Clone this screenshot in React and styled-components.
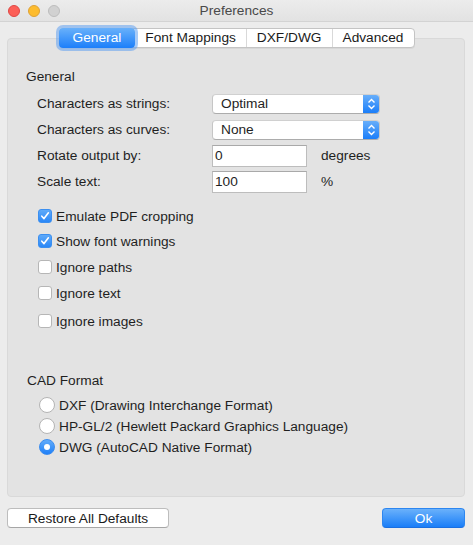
import React from "react";
import styled, { createGlobalStyle } from "styled-components";

const GlobalStyle = createGlobalStyle`
  html, body {
    margin: 0;
    padding: 0;
    background: #ececec;
  }
  body {
    font-family: "Liberation Sans", Arial, sans-serif;
    font-size: 13.7px;
    color: #1f1f1f;
  }
`;

const tabs = ["General", "Font Mappings", "DXF/DWG", "Advanced"];

const options = [
  { label: "Emulate PDF cropping", checked: true },
  { label: "Show font warnings", checked: true },
  { label: "Ignore paths", checked: false },
  { label: "Ignore text", checked: false },
  { label: "Ignore images", checked: false, spaced: true },
];

const formats = [
  { label: "DXF (Drawing Interchange Format)", selected: false },
  { label: "HP-GL/2 (Hewlett Packard Graphics Language)", selected: false },
  { label: "DWG (AutoCAD Native Format)", selected: true },
];

function Chevrons() {
  return (
    <svg width="9" height="12" viewBox="0 0 9 12">
      <path
        d="M1.5 4.5 L4.5 1.5 L7.5 4.5 M1.5 7.5 L4.5 10.5 L7.5 7.5"
        fill="none"
        stroke="#fff"
        strokeWidth="1.4"
      />
    </svg>
  );
}

function Check() {
  return (
    <svg width="10" height="10" viewBox="0 0 10 10">
      <path
        d="M1.8 5.2 L4 7.6 L8.4 1.8"
        fill="none"
        stroke="#fff"
        strokeWidth="1.6"
        strokeLinecap="round"
        strokeLinejoin="round"
      />
    </svg>
  );
}

export default function App() {
  return (
    <Window>
      <GlobalStyle />
      <TitleBar>
        <Lights>
          <Light $color="#fc5f57" $edge="#df4744" />
          <Light $color="#fdbc2e" $edge="#dea236" />
          <Light $color="#d1d1d1" $edge="#bdbdbd" />
        </Lights>
        <Title>Preferences</Title>
      </TitleBar>
      <Body>
        <Segments>
          {tabs.map((t, i) => (
            <Segment key={t} $active={i === 0}>
              {t}
            </Segment>
          ))}
        </Segments>
        <Panel>
          <SectionTitle>General</SectionTitle>
          <FormGrid>
            <Label>Characters as strings:</Label>
            <Popup>
              <PopupText>Optimal</PopupText>
              <PopupArrow>
                <Chevrons />
              </PopupArrow>
            </Popup>
            <Label>Characters as curves:</Label>
            <Popup>
              <PopupText>None</PopupText>
              <PopupArrow>
                <Chevrons />
              </PopupArrow>
            </Popup>
            <Label>Rotate output by:</Label>
            <Field>0</Field>
            <Unit>degrees</Unit>
            <Label>Scale text:</Label>
            <Field>100</Field>
            <Unit>%</Unit>
          </FormGrid>
          <CheckList>
            {options.map((o) => (
              <CheckRow key={o.label} $spaced={o.spaced}>
                <Box $checked={o.checked}>{o.checked && <Check />}</Box>
                {o.label}
              </CheckRow>
            ))}
          </CheckList>
          <SectionTitle $cad>CAD Format</SectionTitle>
          <RadioList>
            {formats.map((f) => (
              <RadioRow key={f.label}>
                <Radio $selected={f.selected} />
                {f.label}
              </RadioRow>
            ))}
          </RadioList>
        </Panel>
        <Footer>
          <Button>Restore All Defaults</Button>
          <Button $primary>Ok</Button>
        </Footer>
      </Body>
    </Window>
  );
}

const Window = styled.div`
  width: 473px;
  height: 545px;
  display: flex;
  flex-direction: column;
  background: #ececec;
  overflow: hidden;
`;

const TitleBar = styled.div`
  height: 21px;
  flex: none;
  display: flex;
  align-items: center;
  justify-content: center;
  position: relative;
  background: linear-gradient(#ececec, #e2e2e2);
  border-bottom: 1px solid #d3d3d3;
`;

const Lights = styled.div`
  position: absolute;
  left: 8px;
  top: 5px;
  display: flex;
  gap: 8px;
`;

const Light = styled.span`
  width: 12px;
  height: 12px;
  box-sizing: border-box;
  border-radius: 50%;
  background: ${(p) => p.$color};
  border: 1px solid ${(p) => p.$edge};
`;

const Title = styled.div`
  font-size: 13.7px;
  color: #4a4a4a;
`;

const Body = styled.div`
  flex: 1;
  display: flex;
  flex-direction: column;
  padding: 6px 8px 17px 7px;
  min-height: 0;
`;

const Segments = styled.div`
  align-self: center;
  display: flex;
  height: 20px;
  margin-left: 2px;
  position: relative;
  z-index: 1;
  background: #fff;
  border: 1px solid #c4c4c4;
  border-radius: 4px;
  box-sizing: border-box;
  box-shadow: 0 1px 0 rgba(0, 0, 0, 0.05);
`;

const Segment = styled.div`
  display: flex;
  align-items: center;
  justify-content: center;
  padding: 0 10px;
  line-height: 1;
  color: ${(p) => (p.$active ? "#fff" : "#1a1a1a")};
  border-left: ${(p) => (p.$active ? "none" : "1px solid #d9d9d9")};
  &:first-child {
    margin: -1px 0 -1px -1px;
    padding: 0 14px 0 14px;
    border-radius: 4px;
    background: linear-gradient(#69b1fa, #1c7ffa);
    box-shadow: 0 0 0 3px rgba(96, 160, 240, 0.55);
  }
  &:nth-child(2) {
    border-left: none;
  }
  &:last-child {
    padding-right: 11px;
  }
`;

const Panel = styled.div`
  flex: 1;
  margin-top: -10px;
  background: #e3e3e3;
  border: 1px solid #d9d9d9;
  border-radius: 4px;
  padding: 30px 0 0 18px;
  display: flex;
  flex-direction: column;
`;

const SectionTitle = styled.div`
  line-height: 16px;
  margin-left: ${(p) => (p.$cad ? "1px" : "0")};
  margin-top: ${(p) => (p.$cad ? "42px" : "0")};
`;

const FormGrid = styled.div`
  display: grid;
  grid-template-columns: 161px 95px auto;
  grid-auto-rows: 21px;
  column-gap: 14px;
  row-gap: 5px;
  align-items: center;
  margin: 8px 0 0 11px;
`;

const Label = styled.div`
  white-space: nowrap;
`;

const Popup = styled.div`
  grid-column: span 2;
  width: 168px;
  height: 20px;
  box-sizing: border-box;
  display: flex;
  background: #fff;
  border: 1px solid #c6c6c6;
  border-top-color: #d0d0d0;
  border-bottom-color: #acacac;
  border-radius: 4px;
  overflow: hidden;
`;

const PopupText = styled.div`
  flex: 1;
  display: flex;
  align-items: center;
  padding-left: 8px;
`;

const PopupArrow = styled.div`
  width: 16px;
  display: flex;
  align-items: center;
  justify-content: center;
  background: linear-gradient(#67aefa, #1b7ef9);
`;

const Field = styled.div`
  height: 22px;
  box-sizing: border-box;
  display: flex;
  align-items: center;
  padding-left: 2px;
  background: #fff;
  border: 1px solid #bdbdbd;
  border-top-color: #a9a9a9;
`;

const Unit = styled.div``;

const CheckList = styled.div`
  display: flex;
  flex-direction: column;
  gap: 6px;
  margin: 14px 0 0 12px;
`;

const CheckRow = styled.div`
  height: 20px;
  display: flex;
  align-items: center;
  gap: 4px;
  margin-top: ${(p) => (p.$spaced ? "2px" : "0")};
  &:first-child + & {
    margin-top: -1px;
  }
`;

const Box = styled.span`
  width: 14px;
  height: 14px;
  box-sizing: border-box;
  border-radius: 3px;
  display: flex;
  align-items: center;
  justify-content: center;
  background: ${(p) =>
    p.$checked ? "linear-gradient(#5faaf9, #2a87f7)" : "#fff"};
  border: 1px solid ${(p) => (p.$checked ? "#3b8ff0" : "#b6b6b6")};
`;

const RadioList = styled.div`
  display: flex;
  flex-direction: column;
  gap: 1px;
  margin: 6px 0 0 13px;
`;

const RadioRow = styled.div`
  height: 20px;
  display: flex;
  align-items: center;
  gap: 4px;
`;

const Radio = styled.span`
  width: 16px;
  height: 16px;
  box-sizing: border-box;
  border-radius: 50%;
  display: flex;
  align-items: center;
  justify-content: center;
  background: ${(p) =>
    p.$selected ? "linear-gradient(#62acfa, #1f80f8)" : "#fff"};
  border: 1px solid ${(p) => (p.$selected ? "#3a8cf0" : "#b4b4b4")};
  &::after {
    content: "";
    display: ${(p) => (p.$selected ? "block" : "none")};
    width: 6px;
    height: 6px;
    border-radius: 50%;
    background: #fff;
  }
`;

const Footer = styled.div`
  flex: none;
  display: flex;
  justify-content: space-between;
  margin-top: 11px;
`;

const Button = styled.div`
  height: 20px;
  box-sizing: border-box;
  display: flex;
  align-items: center;
  justify-content: center;
  width: ${(p) => (p.$primary ? "83px" : "162px")};
  border-radius: 4px;
  color: ${(p) => (p.$primary ? "#fff" : "#1a1a1a")};
  background: ${(p) =>
    p.$primary ? "linear-gradient(#6ab1fb, #1a7ef8)" : "#fff"};
  border: 1px solid ${(p) => (p.$primary ? "#2d86f0" : "#bdbdbd")};
  border-bottom-color: ${(p) => (p.$primary ? "#1a6fe0" : "#a6a6a6")};
`;
